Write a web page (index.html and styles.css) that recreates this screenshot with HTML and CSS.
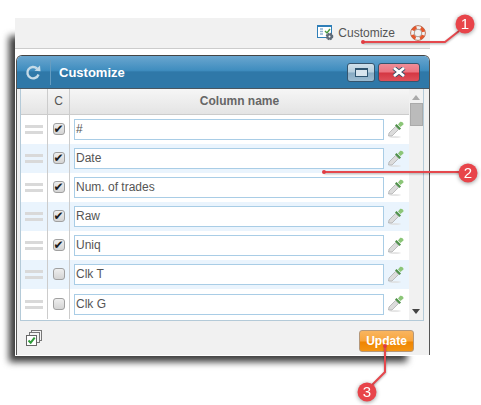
FILE: index.html
```html
<!DOCTYPE html>
<html lang="en">
<head>
  <meta charset="UTF-8">
  <title>Customize</title>
  <link rel="stylesheet" href="styles.css">
</head>
<body>
  <svg class="defs" width="0" height="0">
    <symbol id="dropper" viewBox="0 0 16 18">
      <ellipse cx="7" cy="16" rx="6" ry="0.7" fill="#ddd"/>
      <path d="M.5 15 L1 12 L7.5 5.5 L10.5 8.5 L4 15 Z" fill="#dcdcdc" stroke="#a8a8a8" stroke-width=".7"/>
      <path d="M7 4.5 L11.5 9 L13 7.5 L8.5 3 Z" fill="#4d8f48"/>
      <path d="M10 3.5 L12 1 C13 0 16 1.5 15.5 3.5 L12.5 6 Z" fill="#8cc678"/>
    </symbol>
  </svg>

  <div class="panel">
    <div class="topbar">
      <svg class="ico-custom" width="17" height="17" viewBox="0 0 17 17">
        <rect x=".5" y="1.5" width="14" height="12" fill="#fff" stroke="#2f7fb8"/>
        <rect x="1" y="1" width="13" height="2" fill="#2f7fb8"/>
        <path d="M3 5h3M3 7.5h3M3 10h3" stroke="#8fb4d2" stroke-width="1.4"/>
        <path d="M8 7l2 2 3-4" fill="none" stroke="#4a9a3f" stroke-width="1.4"/>
        <circle cx="12.5" cy="12.5" r="3" fill="#5f6b78" stroke="#5f6b78" stroke-width="1.6" stroke-dasharray="1.6 .8"/>
        <circle cx="12.5" cy="12.5" r="1" fill="#fff"/>
      </svg>
      <span class="top-label">Customize</span>
      <svg class="ico-help" width="16" height="16" viewBox="0 0 16 16">
        <circle cx="8" cy="8" r="5.6" fill="none" stroke="#e8562a" stroke-width="3.4"/>
        <circle cx="8" cy="8" r="5.6" fill="none" stroke="#f2f2f2" stroke-width="3.4" stroke-dasharray="4.4 4.4" stroke-dashoffset="2.2"/>
        <circle cx="8" cy="8" r="7.4" fill="none" stroke="#a8502f" stroke-width=".7"/>
        <circle cx="8" cy="8" r="3.8" fill="none" stroke="#8f7f76" stroke-width=".7"/>
      </svg>
    </div>

    <div class="dialog">
      <div class="titlebar">
        <svg class="ico-refresh" width="17" height="17" viewBox="0 0 17 17">
          <path d="M13.5 10.5 A5.7 5.7 0 1 1 12 4.5" fill="none" stroke="#c5dbe8" stroke-width="2.4"/>
          <path d="M9.5 6.8 L15.5 7.2 L15 1.5 Z" fill="#c5dbe8"/>
        </svg>
        <h2 class="title">Customize</h2>
        <button class="win-btn win-restore"><span class="restore-glyph"></span></button>
        <button class="win-btn win-close">
          <svg width="16" height="10" viewBox="0 0 16 10"><path d="M3 1l10 8M13 1L3 9" stroke="#39506a" stroke-width="4.6"/><path d="M3 1l10 8M13 1L3 9" stroke="#fff" stroke-width="2.8"/></svg>
        </button>
      </div>

      <div class="grid-wrap">
        <div class="grid">
          <div class="head">
            <div class="cell"></div>
            <div class="cell">C</div>
            <div class="cell cell-name">Column name</div>
          </div>
          <div class="row">
            <div class="cell"><span class="handle"></span></div>
            <div class="cell"><span class="check on">&#10004;</span></div>
            <div class="cell cell-input"><div class="field">#</div><svg class="dropper"><use href="#dropper"/></svg></div>
          </div>
          <div class="row">
            <div class="cell"><span class="handle"></span></div>
            <div class="cell"><span class="check on">&#10004;</span></div>
            <div class="cell cell-input"><div class="field">Date</div><svg class="dropper"><use href="#dropper"/></svg></div>
          </div>
          <div class="row">
            <div class="cell"><span class="handle"></span></div>
            <div class="cell"><span class="check on">&#10004;</span></div>
            <div class="cell cell-input"><div class="field">Num. of trades</div><svg class="dropper"><use href="#dropper"/></svg></div>
          </div>
          <div class="row">
            <div class="cell"><span class="handle"></span></div>
            <div class="cell"><span class="check on">&#10004;</span></div>
            <div class="cell cell-input"><div class="field">Raw</div><svg class="dropper"><use href="#dropper"/></svg></div>
          </div>
          <div class="row">
            <div class="cell"><span class="handle"></span></div>
            <div class="cell"><span class="check on">&#10004;</span></div>
            <div class="cell cell-input"><div class="field">Uniq</div><svg class="dropper"><use href="#dropper"/></svg></div>
          </div>
          <div class="row">
            <div class="cell"><span class="handle"></span></div>
            <div class="cell"><span class="check"></span></div>
            <div class="cell cell-input"><div class="field">Clk T</div><svg class="dropper"><use href="#dropper"/></svg></div>
          </div>
          <div class="row row-last">
            <div class="cell"><span class="handle"></span></div>
            <div class="cell"><span class="check"></span></div>
            <div class="cell cell-input"><div class="field">Clk G</div><svg class="dropper"><use href="#dropper"/></svg></div>
          </div>
        </div>
        <div class="scrollbar">
          <span class="arrow-up"></span>
          <span class="thumb"></span>
          <span class="arrow-down"></span>
        </div>
      </div>

      <div class="footer">
        <svg width="16" height="16" viewBox="0 0 16 16">
          <rect x="5.5" y=".5" width="10" height="10" fill="#f4f4f4" stroke="#777"/>
          <rect x="3.5" y="2.5" width="10" height="10" fill="#f4f4f4" stroke="#777"/>
          <rect x=".5" y="5.5" width="10" height="10" fill="#fff" stroke="#666"/>
          <path d="M2.5 10.5l2.2 2.2 4-5" fill="none" stroke="#2f9a3a" stroke-width="2"/>
        </svg>
        <button class="update">Update</button>
      </div>
    </div>
  </div>

  <svg class="callouts" width="481" height="405" viewBox="0 0 481 405">
    <g class="lines">
      <path d="M363 42H445L459 31"/>
      <path d="M324 172H460"/>
      <path d="M385 346V372L372 385"/>
    </g>
    <g class="dots">
      <circle cx="363" cy="42" r="2"/>
      <circle cx="324" cy="172" r="2"/>
      <circle cx="385" cy="346" r="2"/>
    </g>
    <g class="badge">
      <circle cx="465" cy="24" r="9.5"/>
      <circle cx="468" cy="173" r="9.5"/>
      <circle cx="367" cy="392" r="9.5"/>
      <text x="465" y="29">1</text>
      <text x="468" y="178">2</text>
      <text x="367" y="397">3</text>
    </g>
  </svg>
</body>
</html>
```

FILE: styles.css
```css
body { margin: 0; background: #fff; font-family: "Liberation Sans", Arial, sans-serif; width: 481px; height: 405px; overflow: hidden; position: relative; }
.defs { position: absolute; }

.panel { width: 415px; height: 338px; margin: 18px 0 0 15px; position: relative; background: #fff; }
.panel::before { content: ""; position: absolute; left: -6px; top: 18px; right: 23px; bottom: -6px; background: #3c3c3c; filter: blur(3.5px); z-index: -1; }

.topbar { height: 30px; background: #f1f1f1; border-bottom: 1px solid #ccc; display: flex; align-items: center; padding-right: 4px; justify-content: flex-end; }
.ico-custom { margin-right: 4px; margin-top: -1px; }
.top-label { font-size: 12px; color: #555; margin-right: 15px; }
.ico-help { margin-right: 0; }

.dialog { margin: 6px 0 0 1px; height: 300px; border: 1px solid #555; border-top-color: #444; border-radius: 6px 6px 0 0; box-sizing: border-box; background: #f1f1f1; border-bottom: 0; border-left-width: 1px; display: flex; flex-direction: column; }
.titlebar { height: 32px; background: linear-gradient(#6aa6cf 0, #3f8dbf 45%, #2f78a8 50%, #2f78a8 100%); border-radius: 5px 5px 0 0; border-bottom: 1px solid #4a5660; display: flex; align-items: center; padding: 0 9px 0 8px; flex: none; }
.ico-refresh { margin-right: 8px; }
.title { flex: 1; margin: 0; padding-left: 8px; height: 25px; line-height: 25px; border-left: 1px solid #659cc0; font-size: 13px; font-weight: bold; color: #fff; }
.win-btn { height: 19px; border: 1px solid #35556e; border-radius: 3px; padding: 0; display: flex; align-items: center; justify-content: center; margin-top: 0; }
.win-restore { width: 28px; background: linear-gradient(#d0e0ea 0, #b4cddd 48%, #86aac3 52%, #9dbcd1 100%); margin-right: 3px; }
.restore-glyph { width: 13px; height: 9px; border: 1px solid #2f5570; border-top-width: 2px; background: #d8e5ee; box-sizing: border-box; }
.win-close { width: 42px; background: linear-gradient(#f08d97 0, #ec7480 48%, #d43642 52%, #de505a 100%); }

.grid-wrap { display: flex; margin: 0 5px 0 3px; height: 232px; border: 1px solid #b4cad8; border-top: 0; box-sizing: border-box; flex: none; }
.grid { width: 388px; flex: none; background: #fff; }
.head { display: grid; grid-template-columns: 27px 22px 1fr; height: 26px; background: linear-gradient(#f6f6f6, #e4e4e4); border-bottom: 1px solid #ccc; box-sizing: border-box; font-size: 12px; color: #555; }
.head .cell { display: flex; align-items: center; justify-content: center; padding-bottom: 2px; }
.cell-name { font-weight: bold; color: #666; }
.row { display: grid; grid-template-columns: 27px 22px 1fr; height: 29px; }
.row:nth-child(odd) { background: #eaf4fd; }
.row-last { height: 30px; }
.cell { border-right: 1px solid #ccc; display: flex; align-items: center; justify-content: center; box-sizing: border-box; }
.cell:last-child { border-right: 0; }
.cell-input { padding: 0 4px 0 4px; justify-content: flex-start; }

.handle { width: 18px; height: 3px; border-top: 3px solid #d9d9d9; border-bottom: 3px solid #d9d9d9; }
.check { width: 12px; height: 12px; box-sizing: border-box; border: 1px solid #a0a0a0; border-radius: 3px; background: linear-gradient(#eee, #d4d4d4); font: 12px/10px "DejaVu Sans", sans-serif; text-align: center; color: #1c1c1c; display: block; overflow: hidden; margin-top: -1px; }
.field { width: 310px; height: 21px; box-sizing: border-box; background: #fff; border: 1px solid #a9cde6; font-size: 12px; line-height: 19px; padding-left: 1px; color: #555; }
.dropper { width: 16px; height: 18px; margin-left: 4px; }

.scrollbar { flex: 1; background: #f1f1f1; position: relative; display: flex; flex-direction: column; align-items: center; }
.arrow-up { margin-top: 6px; border: 4px solid transparent; border-top: 0; border-bottom: 5px solid #aaa; }
.thumb { width: 13px; height: 23px; margin-top: 3px; background: #bbb; border: 1px solid #aaa; box-sizing: border-box; }
.arrow-down { margin-top: auto; margin-bottom: 6px; border: 4px solid transparent; border-bottom: 0; border-top: 5px solid #444; }

.footer { flex: 1; display: flex; align-items: flex-start; justify-content: space-between; padding: 9px 15px 0 9px; }
.update { width: 55px; height: 22px; border: 1px solid #b5987a; border-radius: 3px; padding: 0; background: linear-gradient(#f9b560 0, #f8a53d 50%, #ef8500 55%, #f39414 100%); color: #fff; font: bold 12px "Liberation Sans", Arial, sans-serif; }

.callouts { position: absolute; left: 0; top: 0; }
.lines { fill: none; stroke: #e5484d; stroke-width: 2; filter: drop-shadow(0 1px 1px #0005); }
.dots circle { fill: #e03c42; }
.badge { filter: drop-shadow(0 1px 2px #0006); }
.badge circle { fill: #e8444a; }
.badge text { fill: #fff; font-size: 15px; text-anchor: middle; }
```
